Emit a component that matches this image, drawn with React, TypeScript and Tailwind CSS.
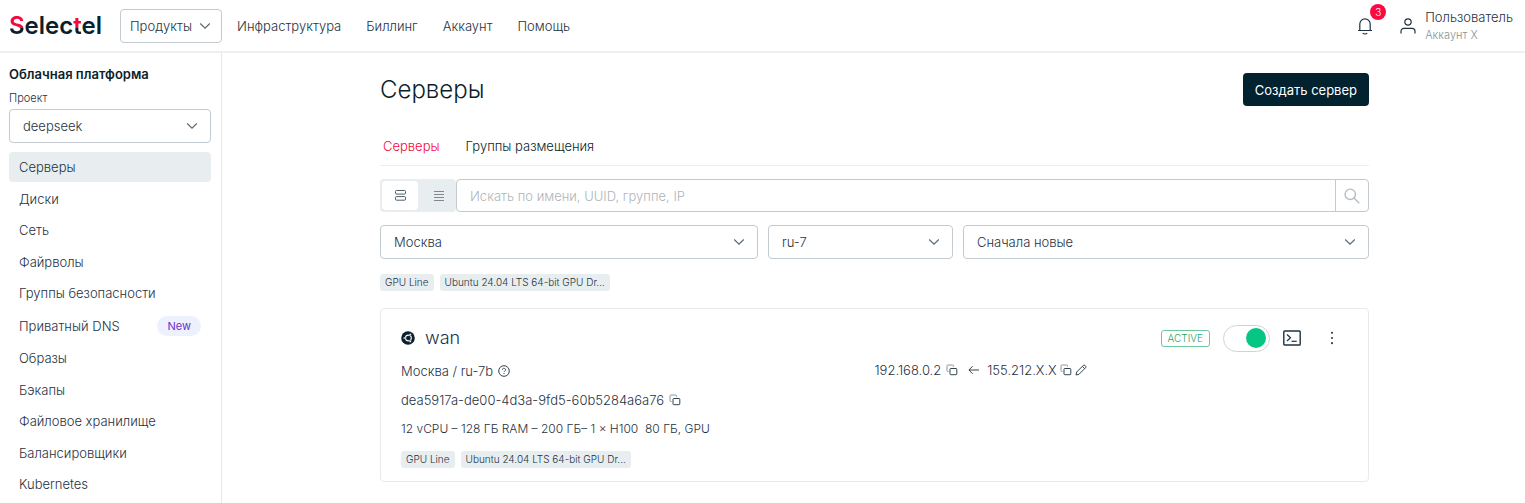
import type { ReactNode } from 'react';

const menu = [
  { name: 'Серверы', active: true },
  { name: 'Диски' },
  { name: 'Сеть' },
  { name: 'Файрволы' },
  { name: 'Группы безопасности' },
  { name: 'Приватный DNS', badge: 'New' },
  { name: 'Образы' },
  { name: 'Бэкапы' },
  { name: 'Файловое хранилище' },
  { name: 'Балансировщики' },
  { name: 'Kubernetes' },
];

const tags = ['GPU Line', 'Ubuntu 24.04 LTS 64-bit GPU Dr...'];

function Chevron({ className = '' }: { className?: string }) {
  return (
    <svg className={className} width="12" height="8" viewBox="0 0 12 8" fill="none" stroke="#5b6b75" strokeWidth="1.2">
      <path d="M1.2 1.5 6 6.2l4.8-4.7" />
    </svg>
  );
}

function Select({ label, value }: { label: string; value: string }) {
  return (
    <div className="relative">
      <select
        aria-label={label}
        className="block w-full h-[34px] appearance-none rounded border border-[#c3cbd0] bg-white pl-[13px] pr-8 text-[#1f323f]"
      >
        <option>{value}</option>
      </select>
      <Chevron className="absolute right-[13px] top-[13px] pointer-events-none" />
    </div>
  );
}

function Tags() {
  return (
    <ul className="flex gap-[6px] text-[10px] leading-[17px]">
      {tags.map((tag) => (
        <li key={tag} className="rounded-[3px] bg-[#e8eef0] px-[5px]">
          {tag}
        </li>
      ))}
    </ul>
  );
}

function IconButton({ label, children }: { label: string; children: ReactNode }) {
  return (
    <button type="button" aria-label={label} className="shrink-0">
      {children}
    </button>
  );
}

function CopyIcon() {
  return (
    <svg width="12" height="12" viewBox="0 0 12 12" fill="none" stroke="#33444f">
      <rect x="4" y="4.5" width="6.8" height="6.2" rx="0.8" />
      <path d="M2.6 7.5H1.8a.8.8 0 0 1-.8-.8V1.8A.8.8 0 0 1 1.8 1h5a.8.8 0 0 1 .8.8v.9" stroke="#8b979e" />
    </svg>
  );
}

function Logo() {
  return (
    <a href="#" className="w-[111px] shrink-0 text-[24px] leading-[28px] font-semibold text-[#0b1f2c]">
      <span className="bg-linear-to-b from-[#f5063d] from-60% to-[#0b1f2c] to-60% bg-clip-text text-transparent">S</span>
      elec<span className="bg-linear-to-b from-[#f5063d] from-60% to-[#0b1f2c] to-60% bg-clip-text text-transparent">t</span>el
    </a>
  );
}

export default function App() {
  return (
    <div className="min-h-screen flex flex-col bg-white font-['Inter',sans-serif] font-light text-[13px] leading-[18px] text-[#1f323f]">
      {/* Header */}
      <header className="flex h-[53px] items-center border-b-2 border-[#eeeff0] pl-[9px] pr-[10px]">
        <Logo />
        <button type="button" className="flex h-[34px] items-center gap-[7px] rounded border border-[#c3cbd0] pl-[9px] pr-[10px]">
          Продукты
          <Chevron />
        </button>
        <nav className="flex gap-[25px] pl-[15px]">
          <a href="#">Инфраструктура</a>
          <a href="#">Биллинг</a>
          <a href="#">Аккаунт</a>
          <a href="#">Помощь</a>
        </nav>
        <div className="ml-auto flex items-center">
          <button type="button" aria-label="Уведомления" className="relative mr-[27px]">
            <svg width="16" height="18" viewBox="0 0 16 18" fill="none" stroke="#1f323f" strokeWidth="1.2">
              <path d="M1 13.5h14M2.8 13.5V7A5.2 5.2 0 0 1 13.2 7v6.5" />
              <path d="M5.8 16c1 1.3 3.4 1.3 4.4 0" />
            </svg>
            <span className="absolute left-[13px] -top-[13px] size-4 rounded-full bg-[#fb0a42] text-center text-[10px] leading-4 text-white">3</span>
          </button>
          <svg width="16" height="16" viewBox="0 0 16 16" fill="none" stroke="#1f323f" strokeWidth="1.2">
            <circle cx="8" cy="4" r="3.2" />
            <path d="M1 15.5v-2.2a3 3 0 0 1 3-3h8a3 3 0 0 1 3 3v2.2" />
          </svg>
          <div className="pl-[9px] pr-[2px]">
            <p>Пользователь</p>
            <p className="text-[11px] text-[#86949b]">Аккаунт X</p>
          </div>
        </div>
      </header>

      <div className="flex flex-1">
        {/* Sidebar */}
        <aside className="w-[222px] shrink-0 border-r border-[#e6e8e9] pl-[9px] pr-[10px] pt-3">
          <h2 className="font-semibold text-[#0b1f2c]">Облачная платформа</h2>
          <p className="pt-[6px] pb-[2px] text-[11px]">Проект</p>
          <Select label="Проект" value="deepseek" />
          <nav className="mt-[9px] flex min-h-[347px] flex-col justify-between">
            {menu.map((item) => (
              <a
                key={item.name}
                href="#"
                className={`flex items-center justify-between rounded px-[10px] py-[6px] ${item.active ? 'bg-[#e8eef0]' : ''}`}
              >
                {item.name}
                {item.badge && (
                  <span className="rounded-full bg-[#edf1fe] px-[10px] text-[11px] leading-[20px] font-normal text-[#6c2fd0]">{item.badge}</span>
                )}
              </a>
            ))}
          </nav>
        </aside>

        {/* Content */}
        <main className="flex-1 pl-[26px] pr-6 pt-5">
          <div className="mx-auto max-w-[989px]">
            <div className="flex items-center justify-between">
              <h1 className="text-[24px] leading-[32px] text-[#0b1f2c]">Серверы</h1>
              <button type="button" className="h-[33px] rounded bg-[#022230] px-3 font-normal text-white">
                Создать сервер
              </button>
            </div>

            <nav className="mt-[21px] flex gap-[26px] border-b border-[#eceff0] px-[3px] pt-[10px] pb-[10px]">
              <a href="#" className="text-[#f5063d]">Серверы</a>
              <a href="#" className="text-[#0b1f2c]">Группы размещения</a>
            </nav>

            {/* Search */}
            <div className="mt-[13px] flex h-[33px]">
              <div className="flex rounded bg-[#e8eef0] py-[2px] pl-[2px]">
                <button type="button" aria-label="Карточки" className="flex w-9 items-center justify-center rounded bg-white">
                  <svg width="11" height="11" viewBox="0 0 11 11" fill="none" stroke="#4d5e69">
                    <rect x="0.5" y="0.5" width="10" height="3.6" rx="1" />
                    <rect x="0.5" y="6.6" width="10" height="3.6" rx="1" />
                  </svg>
                </button>
                <button type="button" aria-label="Список" className="flex w-[38px] items-center justify-center pl-1">
                  <svg width="10" height="10" viewBox="0 0 10 10" stroke="#7b8990">
                    <path d="M0 .5h10M0 3.5h10M0 6.5h10M0 9.5h10" />
                  </svg>
                </button>
              </div>
              <div className="flex flex-1 rounded border border-[#c3cbd0]">
                <input
                  type="text"
                  aria-label="Поиск"
                  placeholder="Искать по имени, UUID, группе, IP"
                  className="min-w-0 flex-1 px-[13px] placeholder:text-[#aeb5b9]"
                />
                <button type="button" aria-label="Найти" className="flex w-[33px] items-center justify-center border-l border-[#c3cbd0]">
                  <svg width="16" height="16" viewBox="0 0 16 16" fill="none" stroke="#b4bdc2" strokeWidth="1.4">
                    <circle cx="6.3" cy="6.3" r="5.2" />
                    <path d="m10 10 5.3 5.3" />
                  </svg>
                </button>
              </div>
            </div>

            {/* Filters */}
            <div className="mt-[13px] mb-[15px] grid grid-cols-[378fr_185fr_406fr] gap-[10px]">
              <Select label="Город" value="Москва" />
              <Select label="Зона" value="ru-7" />
              <Select label="Сортировка" value="Сначала новые" />
            </div>
            <Tags />

            {/* Server card */}
            <article className="mt-[17px] rounded border border-[#e8ebec] px-5 pt-[15px] pb-[13px]">
              <div className="flex h-7 items-center">
                <svg width="14" height="14" viewBox="0 0 14 14" fill="none">
                  <circle cx="7" cy="7" r="6.8" fill="#0b1f2c" />
                  <circle cx="7.4" cy="7" r="2.9" stroke="#fff" strokeWidth="1.1" />
                  <g fill="#fff" stroke="#0b1f2c" strokeWidth="0.4">
                    <circle cx="3.3" cy="7" r="1.1" />
                    <circle cx="9.3" cy="3.6" r="1.1" />
                    <circle cx="9.3" cy="10.4" r="1.1" />
                  </g>
                </svg>
                <h3 className="pl-[10px] text-[18px]">wan</h3>
                <div className="ml-auto flex items-center">
                  <span className="rounded-[3px] border border-[#6fc79e] px-[6px] text-[10px] leading-[15px] text-[#1fa367]">ACTIVE</span>
                  <input
                    type="checkbox"
                    role="switch"
                    aria-label="Питание сервера"
                    defaultChecked
                    className="ml-[13px] flex h-[27px] w-[47px] appearance-none items-center rounded-full border border-[#cdd4d8] px-[3px] before:size-5 before:rounded-full before:bg-[#b4bdc2] checked:justify-end checked:before:bg-[#05c683]"
                  />
                  <div className="flex items-center gap-[23px] pl-[13px] pr-[8px]">
                    <IconButton label="Консоль">
                      <svg width="18" height="16" viewBox="0 0 18 16" fill="none" stroke="#1f323f" strokeWidth="1.4">
                        <rect x="0.8" y="1" width="16.4" height="14" rx="0.8" />
                        <path d="m4 4.5 3.5 3.3L4 11" strokeWidth="1.2" />
                        <path d="M8.5 11.3h5.2" strokeWidth="1.2" />
                      </svg>
                    </IconButton>
                    <IconButton label="Ещё">
                      <svg width="16" height="16" viewBox="0 0 16 16" fill="#33444f">
                        <circle cx="8" cy="2.8" r="1.1" />
                        <circle cx="8" cy="8" r="1.1" />
                        <circle cx="8" cy="13.2" r="1.1" />
                      </svg>
                    </IconButton>
                  </div>
                </div>
              </div>

              <div className="grid grid-cols-2 pt-[10px]">
                <div className="space-y-[11px]">
                  <p className="flex items-center gap-[5px]">
                    Москва / ru-7b
                    <IconButton label="Подсказка">
                      <svg width="12" height="12" viewBox="0 0 12 12" fill="none" stroke="#33444f">
                        <circle cx="6" cy="6" r="5.3" />
                        <path d="M4.4 4.8a1.6 1.5 0 1 1 2.3 1.3c-.5.3-.7.5-.7 1M6 8v1" strokeWidth="0.9" />
                      </svg>
                    </IconButton>
                  </p>
                  <p className="flex items-center gap-[5px]">
                    dea5917a-de00-4d3a-9fd5-60b5284a6a76
                    <IconButton label="Скопировать ID"><CopyIcon /></IconButton>
                  </p>
                  <p className="whitespace-pre text-[12px] leading-[18px]">12 vCPU – 128 ГБ RAM – 200 ГБ– 1 × H100  80 ГБ, GPU</p>
                </div>
                <div className="flex h-4 items-center gap-[3px]">
                  <span>192.168.0.2</span>
                  <span className="flex items-center gap-[10px] px-[2px]">
                    <IconButton label="Скопировать приватный IP"><CopyIcon /></IconButton>
                    <svg className="mr-[3px]" width="11" height="10" viewBox="0 0 11 10" fill="none" stroke="#33444f">
                      <path d="M11 5H1M4.6 1.2.9 5l3.7 3.8" />
                    </svg>
                  </span>
                  <span>155.212.X.X</span>
                  <IconButton label="Скопировать публичный IP"><CopyIcon /></IconButton>
                  <IconButton label="Изменить">
                    <svg width="12" height="12" viewBox="0 0 12 12" fill="none" stroke="#33444f">
                      <path d="m1 11 .7-3L8.3 1.4a1.2 1.2 0 0 1 1.7 0l.6.6a1.2 1.2 0 0 1 0 1.7L4 10.3zM7.4 2.4l2.2 2.2" />
                    </svg>
                  </IconButton>
                </div>
              </div>
              <div className="pt-[13px]">
                <Tags />
              </div>
            </article>
          </div>
        </main>
      </div>
    </div>
  );
}
